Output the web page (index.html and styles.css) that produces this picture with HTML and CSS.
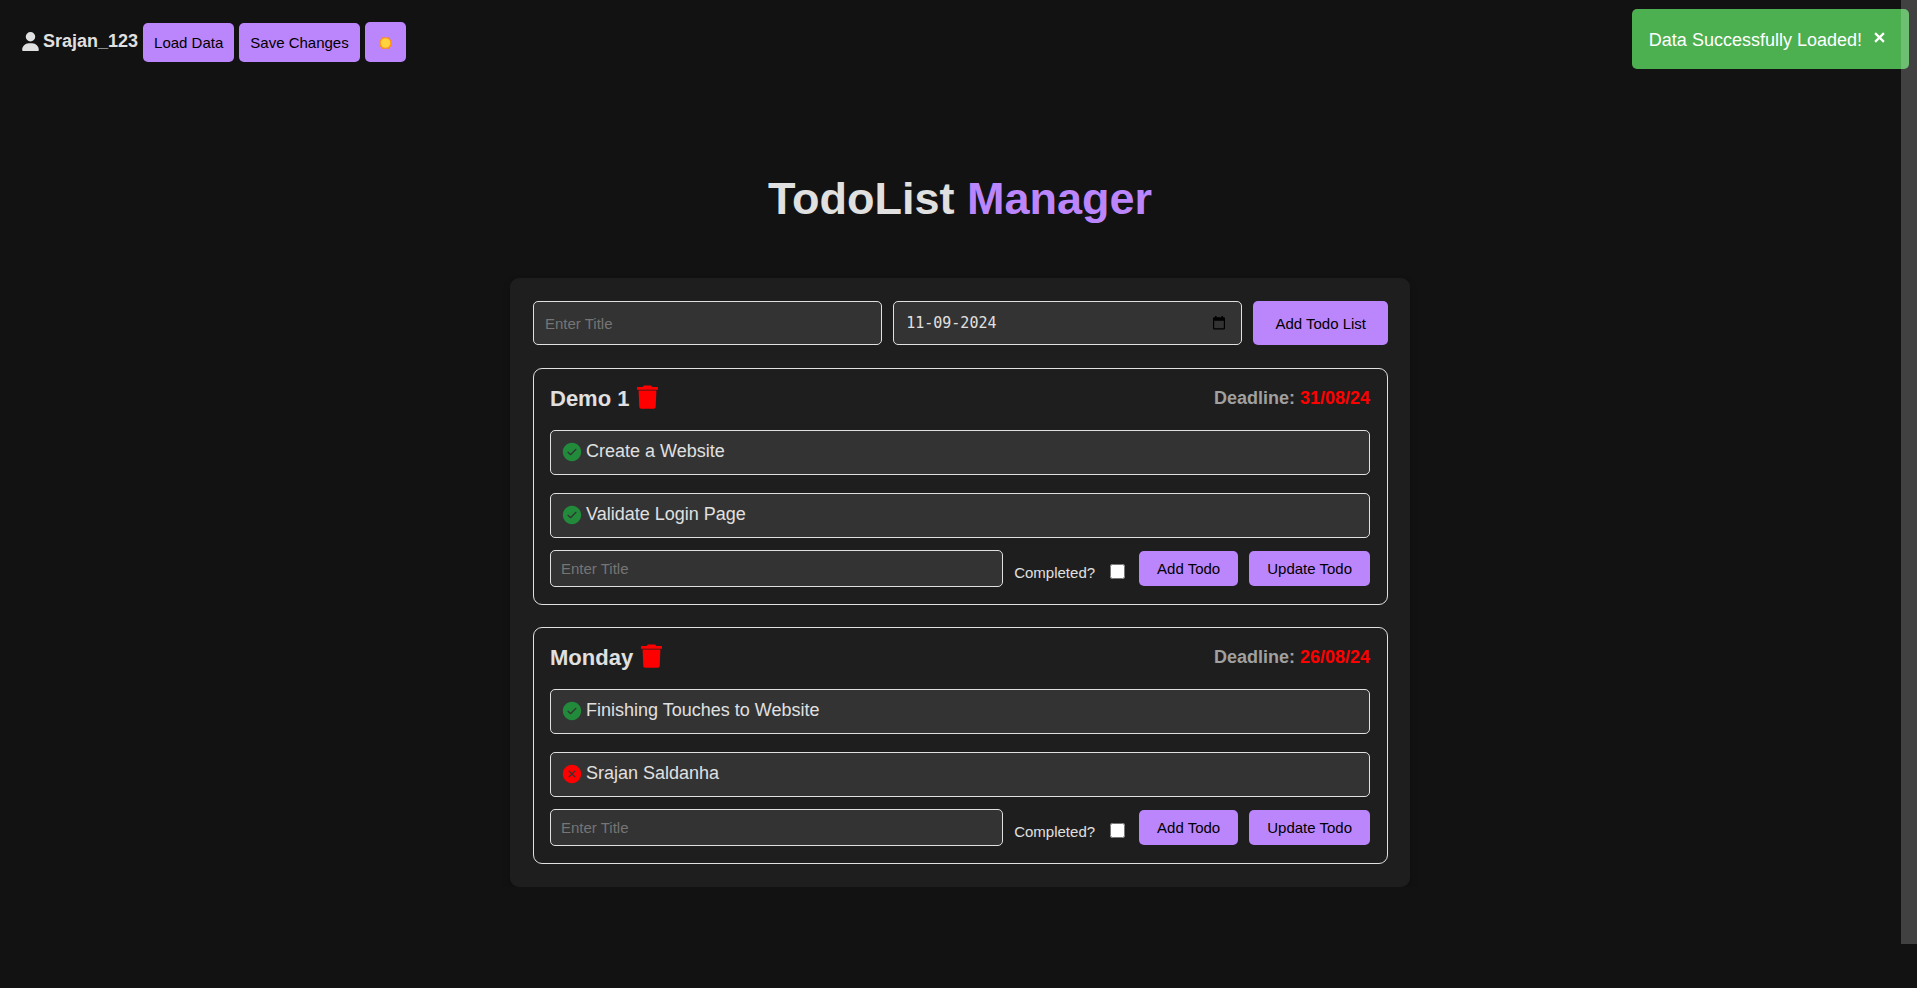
FILE: index.html
```html
<!DOCTYPE html>
<html lang="en">
<head>
<meta charset="utf-8">
<title>TodoList Manager</title>
<link rel="stylesheet" href="styles.css">
</head>
<body>
<svg class="sprite" aria-hidden="true">
  <symbol id="person" viewBox="0 0 448 512"><path d="M224 256a128 128 0 1 0 0-256 128 128 0 1 0 0 256zm-45.700 48C79.800 304 0 383.800 0 482.300 0 498.700 13.300 512 29.700 512h388.600c16.400 0 29.700-13.300 29.700-29.700 0-98.500-79.800-178.300-178.300-178.300z"/></symbol>
  <symbol id="trash" viewBox="0 0 21 24"><path d="M.6 2H5.500L7 .5h7L15.500 2h4.900q.6 0 .6.600v2.200H0V2.600Q0 2 .6 2Z"/><path d="M1.600 5.600h17.800L18.700 22q-.1 1.800-1.900 1.800H4.200Q2.400 23.800 2.300 22Z"/></symbol>
  <symbol id="done" viewBox="0 0 24 24"><path d="M1 12C1 5.925 5.925 1 12 1s11 4.925 11 11-4.925 11-11 11S1 18.075 1 12Zm16.280-2.720a.751.751 0 0 0-.018-1.042.751.751 0 0 0-1.042-.018l-5.970 5.970-2.470-2.470a.751.751 0 0 0-1.042.018.751.751 0 0 0-.018 1.042l3 3a.750.750 0 0 0 1.060 0Z"/></symbol>
  <symbol id="open" viewBox="0 0 24 24"><path d="M1 12C1 5.925 5.925 1 12 1s11 4.925 11 11-4.925 11-11 11S1 18.075 1 12Zm8.036-4.024a.751.751 0 0 0-1.042.018.751.751 0 0 0-.018 1.042L10.939 12l-2.963 2.963a.749.749 0 0 0 .326 1.275.749.749 0 0 0 .734-.215L12 13.060l2.963 2.964a.750.750 0 0 0 1.061-1.060L13.061 12l2.963-2.964a.749.749 0 0 0-.326-1.275.749.749 0 0 0-.734.215L12 10.939Z"/></symbol>
</svg>

<header class="topbar">
  <span class="user"><svg class="user-icon"><use href="#person"/></svg>Srajan_123</span>
  <button class="btn btn-top" type="button">Load Data</button>
  <button class="btn btn-top" type="button">Save Changes</button>
  <button class="btn btn-theme" type="button" aria-label="Switch to light theme">
    <svg class="sun" viewBox="0 0 14 14"><path fill="#ff8f1f" d="m7 0 1.600 1.400 2.100-.5.800 2 2 .8-.5 2.100L14 7l-1 1.700.5 2-2 .8-.8 2-2.100-.5L7 14l-1.600-1-2.100.5-.8-2-2-.8.500-2L0 7l1-1.200-.5-2.100 2-.8.800-2 2.100.5z"/><circle cx="7" cy="7" r="5.200" fill="#ffd23e"/></svg>
  </button>
</header>

<div class="toast" role="status"><span>Data Successfully Loaded!</span><button class="toast-close" type="button" aria-label="Close"><svg viewBox="0 0 10 10"><path d="M1 1l8 8M9 1L1 9"/></svg></button></div>
<div class="scroll-thumb"></div>

<main>
  <h1 class="title">TodoList <span class="accent">Manager</span></h1>
  <section class="panel">
    <form class="new-list">
      <input class="field field-lg" type="text" placeholder="Enter Title" aria-label="List title">
      <div class="field field-lg date">
        <input class="date-text" type="text" value="11-09-2024" aria-label="Deadline">
        <button class="date-open" type="button" aria-label="Choose date"><svg viewBox="0 0 12 14"><path fill-rule="evenodd" d="M2 0h1.500v1.300h5V0H10v1.300h.8q1.200 0 1.200 1.200v9.800q0 1.200-1.200 1.200H1.200Q0 13.500 0 12.300V2.500Q0 1.300 1.200 1.300H2ZM1.200 4.700v7.600h9.600V4.700Z"/></svg></button>
      </div>
      <button class="btn btn-list" type="button">Add Todo List</button>
    </form>

    <article class="card">
      <header class="card-head">
        <h2 class="card-title">Demo 1 <button class="delete" type="button" aria-label="Delete Demo 1"><svg><use href="#trash"/></svg></button></h2>
        <p class="deadline">Deadline: <span class="late">31/08/24</span></p>
      </header>
      <ul class="todos">
        <li class="todo"><svg class="state done"><use href="#done"/></svg>Create a Website</li>
        <li class="todo"><svg class="state done"><use href="#done"/></svg>Validate Login Page</li>
      </ul>
      <form class="new-todo">
        <input class="field field-sm" type="text" placeholder="Enter Title" aria-label="Todo title">
        <label class="completed" for="c1">Completed?</label><input class="check" id="c1" type="checkbox">
        <button class="btn btn-todo" type="button">Add Todo</button>
        <button class="btn btn-todo" type="button">Update Todo</button>
      </form>
    </article>

    <article class="card">
      <header class="card-head">
        <h2 class="card-title">Monday <button class="delete" type="button" aria-label="Delete Monday"><svg><use href="#trash"/></svg></button></h2>
        <p class="deadline">Deadline: <span class="late">26/08/24</span></p>
      </header>
      <ul class="todos">
        <li class="todo"><svg class="state done"><use href="#done"/></svg>Finishing Touches to Website</li>
        <li class="todo"><svg class="state open"><use href="#open"/></svg>Srajan Saldanha</li>
      </ul>
      <form class="new-todo">
        <input class="field field-sm" type="text" placeholder="Enter Title" aria-label="Todo title">
        <label class="completed" for="c2">Completed?</label><input class="check" id="c2" type="checkbox">
        <button class="btn btn-todo" type="button">Add Todo</button>
        <button class="btn btn-todo" type="button">Update Todo</button>
      </form>
    </article>
  </section>
</main>
</body>
</html>
```
FILE: styles.css
```css
* { box-sizing: border-box; }
body {
  margin: 0;
  background: #121212;
  color: #e0e0e0;
  font: 18px/21px "Liberation Sans", Arial, sans-serif;
}
h1, h2, p, ul { margin: 0; padding: 0; }
button, input { font: inherit; color: inherit; }
button { border: 0; padding: 0; background: none; cursor: pointer; }
svg { display: block; fill: currentColor; }
.sprite { position: absolute; width: 0; height: 0; }
main { padding-left: 3px; }

.topbar { display: flex; align-items: flex-end; gap: 5px; padding: 21px 22px 0; }
.user { display: flex; align-items: center; height: 41px; font-weight: 700; }
.user-icon { width: 17px; height: 19px; margin-right: 4px; }

.btn {
  border-radius: 5px;
  background: #bb86fc;
  color: #000;
  font-size: 15px;
  line-height: 17px;
}
.btn-top { padding: 11px; }
.btn-theme { padding: 14px 14px 12px; }
.sun { width: 13px; height: 14px; }

.toast {
  position: fixed;
  top: 9px;
  right: 8px;
  display: flex;
  padding: 21px 24px 18px 17px;
  border-radius: 5px;
  background: #4caf50;
  color: #fff;
}
.toast-close { width: 11px; height: 15px; margin-left: 12px; }
.toast-close svg { width: 11px; height: 11px; fill: none; stroke: #fff; stroke-width: 2; }
.scroll-thumb {
  position: fixed;
  top: 0;
  right: 0;
  width: 16px;
  height: 944px;
  background: rgba(255, 255, 255, 0.2);
}

.title { margin: 110px 0 53px; font-size: 45px; line-height: 53px; text-align: center; }
.accent { color: #bb86fc; }

.panel {
  max-width: 900px;
  margin: 0 auto;
  padding: 23px 22px 23px 23px;
  border-radius: 9px;
  background: #1e1e1e;
  box-shadow: 0 4px 9px rgba(0, 0, 0, 0.2);
}
.field {
  min-width: 0;
  border: 1px solid #e0e0e0;
  border-radius: 5px;
  background: #333;
  font-size: 15px;
}
.field::placeholder { color: #757575; }
.new-list { display: grid; grid-template-columns: 1fr 1fr auto; gap: 11px; margin-bottom: 23px; }
.field-lg { height: 44px; padding: 0 11px; }
.date { display: flex; align-items: center; justify-content: space-between; padding: 0 16px 0 12px; }
.date-text { flex: 1; min-width: 0; border: 0; padding: 0; background: none; font: 15px/17px "DejaVu Sans Mono", monospace; color: #e0e0e0; }
.date-open { color: #000; }
.date-open svg { width: 12px; height: 14px; }
.btn-list { padding: 0 22px; }

.card { padding: 16px 17px 17px 16px; border: 1px solid #e0e0e0; border-radius: 9px; }
.card + .card { margin-top: 22px; }
.card-head { display: flex; align-items: center; justify-content: space-between; height: 27px; }
.card-title { display: flex; align-items: flex-start; gap: 8px; font-size: 22px; line-height: 27px; }
.delete { color: #f00; }
.delete svg { width: 21px; height: 24px; }
.deadline { font-weight: 700; color: #a0a0a0; }
.late { color: #f00; }

.todos { list-style: none; margin-top: 18px; display: grid; gap: 18px; }
.todo { display: flex; align-items: center; height: 45px; padding: 0 11px 2px; border: 1px solid #e0e0e0; border-radius: 5px; background: #333; }
.state { width: 20px; height: 20px; margin-right: 4px; }
.done { color: #228b3b; }
.open { color: #f00; }

.new-todo { display: flex; align-items: center; gap: 11px; margin-top: 12px; }
.field-sm { flex: 1; height: 37px; padding: 0 10px; }
.completed { padding-top: 7px; font-size: 15px; line-height: 17px; }
.check { width: 15px; height: 15px; margin: 5px 3px 0 4px; }
.btn-todo { padding: 9px 18px; }
```
